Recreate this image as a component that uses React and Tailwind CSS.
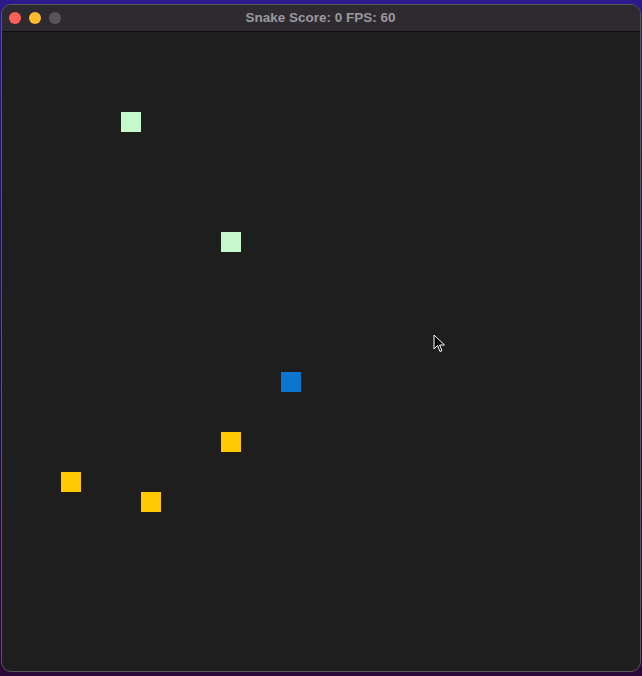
const cells = [
  { x: 6, y: 4, color: 'bg-[#c6f8cb]' },
  { x: 11, y: 10, color: 'bg-[#c6f8cb]' },
  { x: 14, y: 17, color: 'bg-[#0a75cc]' },
  { x: 11, y: 20, color: 'bg-[#ffc802]' },
  { x: 3, y: 22, color: 'bg-[#ffc802]' },
  { x: 7, y: 23, color: 'bg-[#ffc802]' },
];

export default function App() {
  return (
    <div className="w-[642px] h-[676px] overflow-hidden bg-gradient-to-b from-[#2c1a8c] via-[#1d0f55] to-[#2a0838] pt-[4px] pl-[1px]">
      <div className="w-[640px] h-[668px] rounded-[10px] border border-[#5a575c] bg-[#1e1e1e] overflow-hidden flex flex-col">
        <div className="relative h-[27px] bg-[#2e2b30] border-b border-[#0e0e0e] flex items-center shrink-0">
          <div className="flex items-center gap-[8px] pl-[7px]">
            <span className="w-[12px] h-[12px] rounded-full bg-[#fe5f57]" />
            <span className="w-[12px] h-[12px] rounded-full bg-[#febc2e]" />
            <span className="w-[12px] h-[12px] rounded-full bg-[#57555a]" />
          </div>
          <div className="absolute inset-0 flex items-center justify-center pr-[1px] text-[13.5px] font-bold text-[#9b989d] font-['Liberation_Sans',sans-serif]">
            Snake Score: 0 FPS: 60
          </div>
        </div>
        <div className="relative flex-1">
          {cells.map((c, i) => (
            <div
              key={i}
              className={`absolute w-[20px] h-[20px] ${c.color}`}
              style={{ left: c.x * 20 - 1, top: c.y * 20 }}
            />
          ))}
          <svg className="absolute left-[431px] top-[302px]" width="14" height="20" viewBox="0 0 14 20">
            <path d="M1 1 L1 15 L4.5 11.5 L7 17.5 L9 16.6 L6.6 11 L11.5 11 Z" fill="#000" stroke="#fff" strokeWidth="1" />
          </svg>
        </div>
      </div>
    </div>
  );
}
